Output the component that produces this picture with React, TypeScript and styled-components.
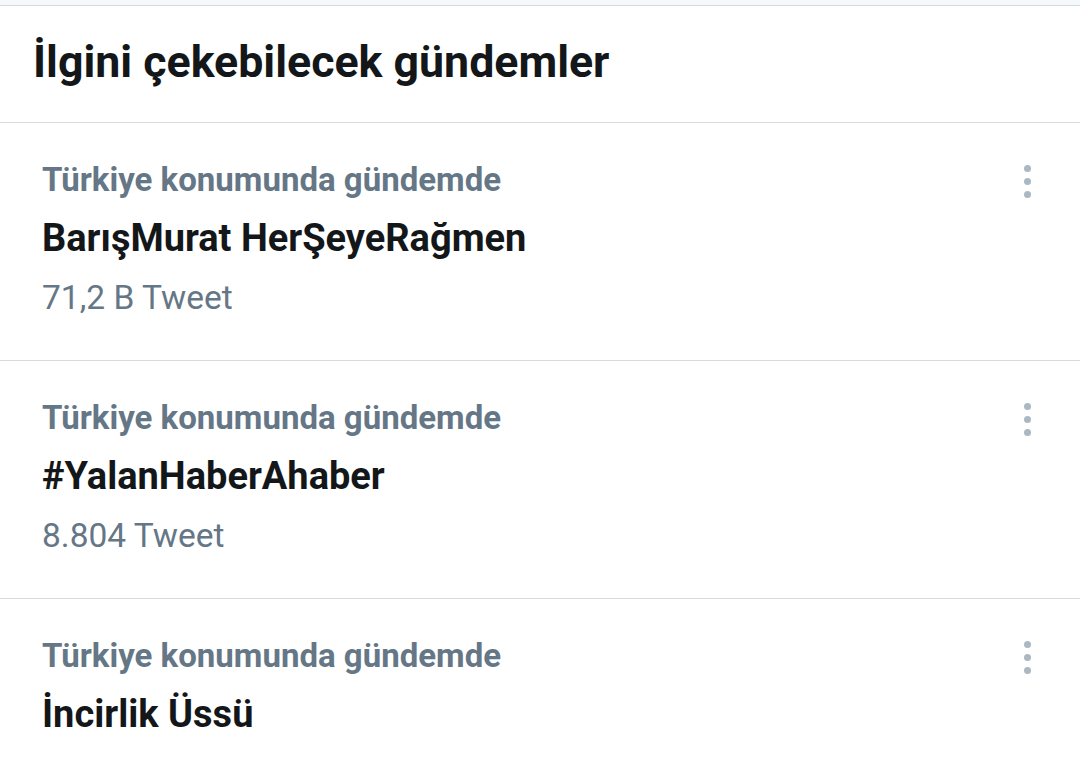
import styled, { createGlobalStyle } from "styled-components";

const GlobalStyle = createGlobalStyle`
  html, body {
    margin: 0;
    padding: 0;
    background: #ffffff;
  }
  body {
    font-family: Roboto, "Noto Sans", "Liberation Sans", sans-serif;
    -webkit-font-smoothing: antialiased;
  }
`;

const Page = styled.div`
  width: 1080px;
  height: 773px;
  overflow: hidden;
  background: #ffffff;
`;

const TopStrip = styled.div`
  height: 5px;
  background: #f5f8fa;
  border-bottom: 1px solid #d4dadd;
`;

const Header = styled.h2`
  margin: 0;
  height: 117px;
  box-sizing: border-box;
  display: flex;
  align-items: center;
  padding: 0 33px 5px;
  font-size: 44.7px;
  font-weight: 700;
  color: #14171a;
  border-bottom: 1px solid #d4dadd;
`;

const Trend = styled.div`
  display: flex;
  justify-content: space-between;
  align-items: flex-start;
  height: 238px;
  padding: 0 42px;
  box-sizing: border-box;
  border-bottom: 1px solid #d4dadd;
`;

const TrendText = styled.div`
  display: flex;
  flex-direction: column;
  padding-top: 37px;
`;

const Context = styled.div`
  font-size: 33px;
  font-weight: 700;
  color: #657786;
  line-height: 40px;
`;

const Title = styled.div`
  margin-top: 16px;
  font-size: 38px;
  font-weight: 700;
  color: #14171a;
  line-height: 44px;
`;

const Count = styled.div`
  margin-top: 18px;
  font-size: 33.5px;
  color: #657786;
  line-height: 40px;
`;

const MoreButton = styled.div`
  display: flex;
  flex-direction: column;
  gap: 6px;
  margin-top: 42px;
  margin-right: 7px;
`;

const Dot = styled.span`
  width: 7px;
  height: 7px;
  border-radius: 50%;
  background: #aab8c2;
`;

const trends = [
  { title: "BarışMurat HerŞeyeRağmen", count: "71,2 B Tweet" },
  { title: "#YalanHaberAhaber", count: "8.804 Tweet" },
  { title: "İncirlik Üssü", count: "" },
];

export default function App() {
  return (
    <Page>
      <GlobalStyle />
      <TopStrip />
      <Header>İlgini çekebilecek gündemler</Header>
      {trends.map((trend) => (
        <Trend key={trend.title}>
          <TrendText>
            <Context>Türkiye konumunda gündemde</Context>
            <Title>{trend.title}</Title>
            {trend.count && <Count>{trend.count}</Count>}
          </TrendText>
          <MoreButton>
            <Dot />
            <Dot />
            <Dot />
          </MoreButton>
        </Trend>
      ))}
    </Page>
  );
}
